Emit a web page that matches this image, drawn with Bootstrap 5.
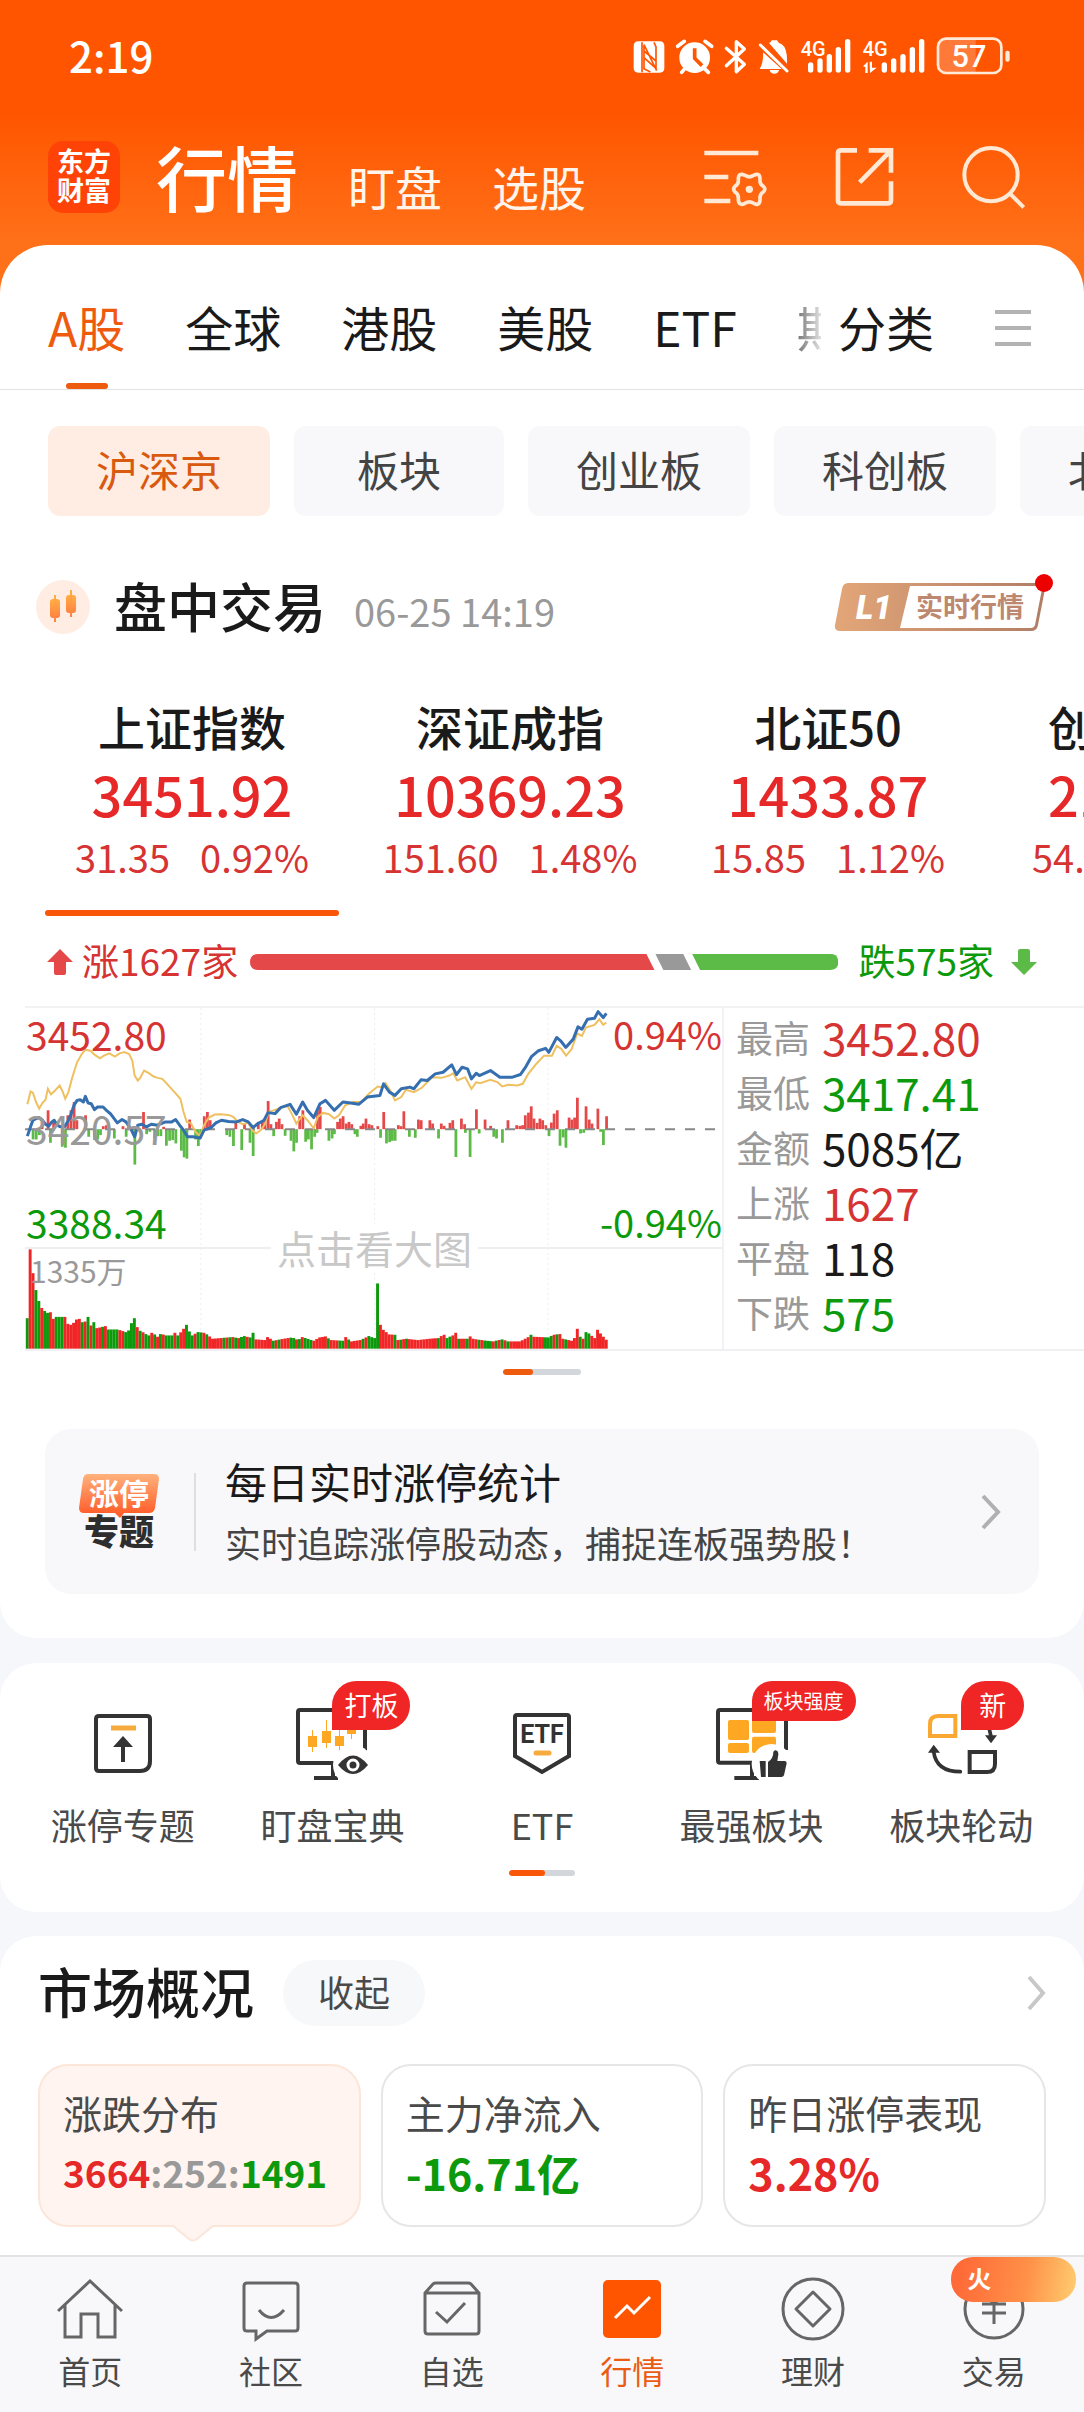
<!DOCTYPE html>
<html lang="zh-CN">
<head>
<meta charset="utf-8">
<meta name="viewport" content="width=device-width, initial-scale=1">
<title>行情</title>
<link href="https://cdn.jsdelivr.net/npm/bootstrap@5.3.0/dist/css/bootstrap.min.css" rel="stylesheet">
<style>
:root{--brand:#ff5500;--rise:#e62828;--fall:#0c9a0c;--ink:#1a1a1a;--muted:#999}
body{font-family:"Noto Sans CJK SC","Noto Sans",sans-serif;background:#f6f7fa;color:var(--ink);overflow-x:hidden;line-height:1.2}
a{color:inherit;text-decoration:none}
button{font-family:inherit;color:inherit;border:0;background:none;padding:0}
svg{display:block;flex-shrink:0}
.up{color:var(--rise)}.up-soft{color:#d63333}.down{color:var(--fall)}.dim{color:var(--muted)}
.hero{background:linear-gradient(#ff5500 0,#ff5500 112px,#ff7119 245px,#ff7119 320px,#f6f7fa 320px)}
.statusbar{height:114px;padding:0 74px 3px 69px;color:#fff}
.clock{font-size:42px;font-weight:500}
.topbar{height:131px;padding:0 58px 6px 48px;color:#fff}
.logo{width:72px;height:72px;border-radius:15px;background:#ff4306;font-size:27px;line-height:29px;font-weight:700;text-align:center;padding-top:5px;margin-right:36px}
.title-main{font-size:71px;line-height:84px;font-weight:500}
.title-sub{font-size:47px;line-height:60px;color:#fff5ec}
.titles{gap:50px;padding-bottom:4px}
.tools{gap:67px;margin-left:auto}
.sheet{background:#fff;border-radius:48px 48px 36px 36px;padding-bottom:44px}
.tabs{padding:0 52px 0 48px;border-bottom:1px solid #e3e3e3;font-size:48px;line-height:60px}
.tablist{gap:60px;overflow:hidden;flex:1 1 0;min-width:0;padding-top:51px}
.tablist a{padding-bottom:33px;white-space:nowrap;flex-shrink:0}
.tablist a.on{color:#ee5a0e;padding-bottom:0}
.tablist a.on::after{content:"";display:block;width:42px;height:6px;border-radius:3px;background:#ee5a0e;margin:27px auto 0}
.tablist a.cut{flex:0 0 24px;overflow:hidden;-webkit-mask-image:linear-gradient(90deg,#0009,#0002);mask-image:linear-gradient(90deg,#0009,#0002)}
.sortlink{margin:51px 60px 0 14px}
.menu-btn{margin-top:61px}
.chips{gap:24px;padding:36px 0 0 48px;overflow:hidden}
.chip{flex:0 0 auto;height:90px;min-width:210px;padding:0 48px 3px;border-radius:12px;background:#f8f8fa;color:#444;font-size:42px;white-space:nowrap}
.chip.on{background:#ffede3;color:#d9590f}
.session{height:72px;margin-top:55px;padding:0 30px 0 36px}
.session h1{font-size:53px;line-height:72px;font-weight:500;margin:0 28px 0 24px;padding-bottom:4px}
.session time{font-size:38px;line-height:72px;padding-top:8px;color:var(--muted)}
.indices{gap:24px;padding:55px 0 0 45px;overflow:hidden}
.index{flex:0 0 294px;text-align:center;white-space:nowrap}
.index.on::after{content:"";display:block;height:6px;border-radius:3px;background:#fa560a;margin-top:31px}
.index h2{font-size:47px;line-height:56px;font-weight:500;margin:0}
.index strong{display:block;font-size:54px;line-height:60px;font-weight:500;margin-top:10px}
.index p{display:flex;justify-content:center;gap:30px;font-size:38px;line-height:44px;margin:11px 0 0}
.index.edge{text-align:left;padding-left:49px}
.index.edge p{justify-content:flex-start;margin-left:-16px}
.breadth{height:44px;margin-top:24px;padding:0 46px;font-size:37px;line-height:40px}
.breadth span{padding-bottom:4px}
.breadth svg.meter{flex:1 1 0;min-width:0;margin:0 20px 0 12px}
.trend{margin:22px 0 0 25px;height:345px;border-top:2px solid #f2f2f4;border-bottom:2px solid #f0f0f2}
.plot{flex:0 0 66%;border-right:2px solid #f2f2f4}
.plot svg{width:100%;height:100%}
.plot span{position:absolute;font-size:38px;line-height:44px}
.plot .tl,.plot .ml,.plot .bl{left:1px;font-size:39px}
.plot .tl,.plot .tr{top:4px}.plot .ml{top:98px}.plot .bl,.plot .br{top:192px}
.plot .tr,.plot .br{right:0}
.plot .vol{left:5px;top:240px;font-size:30px}
.plot .hint{left:246px;top:216px;padding:0 6px;background:#fff;color:#c8c8c8;line-height:46px;font-size:39px}
.figures{margin:2px 0 0 12px;font-size:44px;line-height:55px}
.figures th{font-size:37px;font-weight:400;color:var(--muted);padding:0 12px 0 0}
.figures td{padding:0}
.pager{display:flex;height:6px;border-radius:3px;background:#d3d6db;margin:18px auto 0;width:78px;overflow:hidden}
.pager i{width:30px;border-radius:3px;background:#ee5a0e}
.promo{margin:54px 45px 0;height:165px;border-radius:26px;background:#f8f8fa;padding:0 37px 0 34px}
.promo .rule{width:2px;height:78px;background:#dfdfe2;margin:0 29px 0 35px}
.promo h3{font-size:42px;line-height:56px;font-weight:400;margin:0 0 5px}
.promo p{font-size:36px;line-height:56px;color:#444;margin:0}
.panel{background:#fff;border-radius:36px}
.shortcuts{margin-top:25px;padding:45px 18px 36px}
.shortcut{flex:1 1 0;font-size:36px;line-height:44px;color:#4a4a4a;position:relative}
.shortcut svg{width:72px;height:72px;margin:0 auto 22px}
.flag{position:absolute;left:50%;top:-27px;height:49px;padding:0 12px;border-radius:25px 25px 25px 0;background:#f02525;color:#fff;font-size:27px;line-height:47px;white-space:nowrap}
.flag.slim{height:40px;line-height:39px;font-size:20px;border-radius:20px 20px 20px 0}
.flag.solo{padding:0 18px}
.shortcuts .pager{width:66px;margin-top:24px}
.shortcuts .pager i{width:36px;background:#fa560a}
.overview{margin-top:24px;padding:24px 38px 28px;border-radius:36px 36px 0 0}
.overview h2{font-size:54px;line-height:62px;font-weight:500;margin:0 29px 4px 0}
.fold{height:66px;padding:0 35px 3px;border-radius:33px;background:#f7f8fa;font-size:36px;color:#4a4a4a}
.stats{gap:20px;margin-top:38px}
.stat{flex:1 1 0;height:163px;border:2px solid #e6e6e6;border-radius:30px;padding:21px 0 0 23px;position:relative;white-space:nowrap}
.stat h3{font-size:39px;line-height:50px;font-weight:400;color:#4a4a4a;margin:0 0 7px}
.stat b{display:block;font-size:43px;line-height:56px}
.stat.on{background:#fff4ef;border-color:#fce5d9}
.stat.on b{font-size:37px}
.stat .notch{position:absolute;left:131px;top:100%}
.dock{height:157px;border-top:2px solid #e3e3e5;background:#f8f8fa;padding-top:20px}
.dock a{flex:1 1 0;font-size:32px;line-height:40px;color:#4a4a4a;position:relative}
.dock a.on{color:#ea5c14}
.dock svg{width:66px;height:66px;margin:0 auto 7px}
.fire{position:absolute;left:48px;top:-20px;width:125px;height:45px;border-radius:22px;background:linear-gradient(100deg,#ff6b38 10%,#ff9148 60%,#ffce70);color:#fff;font-size:24px;line-height:42px;font-weight:700;padding-left:16px;text-align:left}
</style>
<script src="https://cdn.jsdelivr.net/npm/bootstrap@5.3.0/dist/js/bootstrap.bundle.min.js"></script>
</head>
<body>
<div class="d-flex flex-column min-vh-100">
<div class="hero">
  <div class="statusbar d-flex align-items-center justify-content-between">
    <span class="clock">2:19</span>
    <svg width="377" height="38" viewBox="100 50 1131 114" fill="#fff">
      <path d="M116 63h64q14 0 14 14v66q0 14-14 14h-64q-14 0-14-14V77q0-14 14-14z"/>
      <path d="M127 66v90M133 73l38 78M133 73v72l19 10M163 66l6 14v66M133 92l36 30M133 112l36 32" stroke="#ff5500" stroke-width="5" fill="none"/>
      <circle cx="285" cy="112" r="46"/><path d="M234 78l20-15M336 78l-20-15M256 144l-10 12M314 144l12 12" stroke="#fff" stroke-width="11" stroke-linecap="round"/><path d="M285 84v30l22 22" stroke="#ff5500" stroke-width="11" fill="none"/>
      <path d="M380 84l54 48-24 22V64l24 22-54 50" fill="none" stroke="#fff" stroke-width="10" stroke-linejoin="round" stroke-linecap="round"/>
      <path d="M482 74l80 78" stroke="#fff" stroke-width="9" stroke-linecap="round"/><path d="M508 68q6-1 8-8h16q3 8 14 12 18 12 16 58zM490 96l56 50h-66q12-20 10-50zM510 149h28q-2 11-14 11t-14-11z"/>
      <g font-size="60" font-weight="500" font-family="Roboto,sans-serif"><text x="603" y="106">4G</text><text x="789" y="106">4G</text></g>
      <g stroke="#fff" stroke-width="16" stroke-linecap="round"><path d="M633 134v15M661 122v27M689 109v40M716 88v61M744 64v85M854 134v15M882 122v27M910 109v40M938 88v61M966 64v85"/></g>
      <path d="M790 138l14-14v34h-7v-18zM810 124h7v18h14l-20 16z"/>
      <path d="M1034 56h94v101h-94q-17 0-17-17V73q0-17 17-17z" opacity=".22"/>
      <rect x="1015" y="55" width="190" height="103" rx="24" fill="none" stroke="#ffeada" stroke-width="8"/><rect x="1217" y="91" width="13" height="33" rx="6" fill="#ffeada"/>
      <text x="1108" y="140" font-size="92" font-weight="500" text-anchor="middle" font-family="Roboto,sans-serif">57</text>
    </svg>
  </div>
  <header class="topbar d-flex align-items-center">
    <a href="#" class="logo">东方<br>财富</a>
    <nav class="titles d-flex align-items-baseline">
      <a href="#" class="title-main">行情</a><a href="#" class="title-sub">盯盘</a><a href="#" class="title-sub">选股</a>
    </nav>
    <div class="tools d-flex align-items-center">
      <button type="button" aria-label="行情设置"><svg width="64" height="64" viewBox="308 375 192 192" fill="none" stroke="#ffe8d4" stroke-width="14"><path d="M309 399h162M309 471h72M309 543h78"/><path d="M431 466q13 9 26 0 20-10 19 14-1 13 10 19 9 8 0 17-11 6-10 20 1 24-19 14-13-9-26 0-20 10-20-14 1-14-10-20-8-9 0-17 11-6 10-19-1-24 20-14z" stroke-width="11"/><circle cx="444" cy="508" r="11" fill="#ffe8d4" stroke="none"/></svg></button>
      <button type="button" aria-label="分享"><svg width="60" height="64" viewBox="698 375 180 192" fill="none" stroke="#ffe8d4" stroke-width="14"><path d="M764 391h-48q-9 0-9 9v141q0 9 9 9h141q9 0 9-9v-57M799 391h67v67M866 391l-94 96"/></svg></button>
      <button type="button" aria-label="搜索"><svg width="64" height="64" viewBox="1086 373 192 192" fill="none" stroke="#ffe8d4" stroke-width="12"><circle cx="1173" cy="462" r="80"/><path d="M1229 518l42 42"/></svg></button>
    </div>
  </header>
  <main class="sheet">
    <div class="tabs d-flex align-items-start">
      <nav class="tablist d-flex">
        <a href="#" class="on">A股</a><a href="#">全球</a><a href="#">港股</a><a href="#">美股</a><a href="#">ETF</a><a href="#" class="cut">期</a>
      </nav>
      <a href="#" class="sortlink">分类</a>
      <button type="button" aria-label="全部市场" class="menu-btn"><svg width="38" height="44" viewBox="0 0 38 44" stroke="#b3b3b3" stroke-width="4"><path d="M1 6h36M1 22h36M1 38h36"/></svg></button>
    </div>
    <div class="chips d-flex">
      <button type="button" class="chip on">沪深京</button><button type="button" class="chip">板块</button><button type="button" class="chip">创业板</button><button type="button" class="chip">科创板</button><button type="button" class="chip">北交所</button>
    </div>
    <div class="session d-flex align-items-center">
      <svg width="54" height="54" viewBox="0 0 54 54"><defs><linearGradient id="cd" x2="0" y2="1"><stop stop-color="#ffae45"/><stop offset="1" stop-color="#ff8142"/></linearGradient></defs><circle cx="27" cy="27" r="27" fill="#ffede3"/><g fill="url(#cd)"><rect x="14" y="19" width="10" height="19" rx="3"/><rect x="18" y="15" width="2" height="27"/><rect x="30" y="15" width="10" height="18" rx="3"/><rect x="34" y="10" width="2" height="27"/></g></svg>
      <h1>盘中交易</h1><time>06-25 14:19</time>
      <svg class="ms-auto" width="220" height="68" viewBox="0 2 220 68"><defs><linearGradient id="lv"><stop stop-color="#e3a678"/><stop offset="1" stop-color="#b07d66"/></linearGradient></defs>
        <path d="M14 12h192q6 0 5 6l-7 36q-1 6-7 6H6q-6 0-5-6l7-36q1-6 6-6z" fill="url(#lv)"/><path d="M76 15h129q3 0 3 3l-7 36q-1 3-4 3H66z" fill="#fff"/>
        <text x="22" y="48" font-size="33" font-weight="900" font-style="italic" fill="#fff" font-family="Roboto,sans-serif">L1</text>
        <text x="82" y="46" font-size="27" font-weight="700" fill="#bd8870">实时行情</text><circle cx="210" cy="12" r="9" fill="#ec0000"/></svg>
    </div>
    <div class="indices d-flex">
      <a href="#" class="index on"><h2>上证指数</h2><strong class="up">3451.92</strong><p class="up-soft"><span>31.35</span><span>0.92%</span></p></a>
      <a href="#" class="index"><h2>深证成指</h2><strong class="up">10369.23</strong><p class="up-soft"><span>151.60</span><span>1.48%</span></p></a>
      <a href="#" class="index"><h2>北证50</h2><strong class="up">1433.87</strong><p class="up-soft"><span>15.85</span><span>1.12%</span></p></a>
      <a href="#" class="index edge"><h2>创业板指</h2><strong class="up">21</strong><p class="up-soft"><span>54.</span></p></a>
    </div>
    <div class="breadth d-flex align-items-center">
      <svg width="28" height="28" viewBox="0 0 28 28" class="me-2" fill="#e54848"><path d="M14 1l13 13h-7v11q0 2-2 2h-8q-2 0-2-2V14H1z"/></svg>
      <span class="up-soft">涨1627家</span>
      <svg class="meter" height="16" viewBox="0 0 592 16" preserveAspectRatio="none"><path d="M8 0h391l8 16H8Q0 16 0 8t8-8z" fill="#e54848"/><path d="M408 0h28l8 16h-28z" fill="#999"/><path d="M445 0h139q8 0 8 8t-8 8H453z" fill="#5cba47"/></svg>
      <span class="down">跌575家</span>
      <svg width="28" height="28" viewBox="0 0 28 28" class="ms-3" fill="#5cba47"><path d="M14 27L1 14h7V3q0-2 2-2h8q2 0 2 2v11h7z"/></svg>
    </div>
    <div class="trend d-flex">
      <div class="plot position-relative">
        <svg id="plot" viewBox="64 81 1767 1030" preserveAspectRatio="none"></svg>
        <span class="tl up-soft">3452.80</span><span class="ml dim">3420.57</span><span class="bl down">3388.34</span>
        <span class="tr up-soft">0.94%</span><span class="br down">-0.94%</span><span class="vol dim">1335万</span><span class="hint">点击看大图</span>
      </div>
      <div>
      <table class="figures">
        <tbody>
        <tr><th scope="row">最高</th><td class="up-soft">3452.80</td></tr>
        <tr><th scope="row">最低</th><td class="down">3417.41</td></tr>
        <tr><th scope="row">金额</th><td>5085亿</td></tr>
        <tr><th scope="row">上涨</th><td class="up-soft">1627</td></tr>
        <tr><th scope="row">平盘</th><td>118</td></tr>
        <tr><th scope="row">下跌</th><td class="down">575</td></tr>
        </tbody>
      </table>
      </div>
    </div>
    <div class="pager"><i></i></div>
    <a href="#" class="promo d-flex align-items-center">
      <svg width="80" height="76" viewBox="0 0 80 76"><defs><linearGradient id="zt" x2="0" y2="1"><stop stop-color="#ffb27c"/><stop offset="1" stop-color="#ff5522"/></linearGradient></defs><path d="M9 0h66q5 0 5 5l-4 29q-1 5-6 5H45l-4 5-5-5H5q-5 0-5-5L4 5q1-5 5-5z" fill="url(#zt)"/><text x="10" y="31" font-size="30" font-weight="700" fill="#fff">涨停</text><text x="5" y="71" font-size="35" font-weight="900" fill="#2e2e2e">专题</text></svg>
      <span class="rule"></span>
      <div><h3>每日实时涨停统计</h3><p>实时追踪涨停股动态，捕捉连板强势股！</p></div>
      <svg class="ms-auto" width="22" height="36" viewBox="0 0 22 36" fill="none" stroke="#b0b0b0" stroke-width="4"><path d="M3 2l15 16L3 34"/></svg>
    </a>
  </main>
</div>

<section class="panel shortcuts">
  <div class="d-flex text-center">
    <a href="#" class="shortcut"><svg viewBox="0 0 72 72" fill="none" stroke="#333" stroke-width="4"><path d="M12 8h48q3 0 3 3v42q0 10-10 10H12q-3 0-3-3V11q0-3 3-3z"/><path d="M24 20h25" stroke="#f5ab3d" stroke-width="5"/><path d="M36 34v20"/><path d="M36 28l10 11H26z" fill="#333" stroke="none"/></svg>涨停专题</a>
    <a href="#" class="shortcut"><svg viewBox="0 0 72 72"><path d="M37 70V55H4q-2 0-2-2V4q0-2 2-2h63q2 0 2 2v44M18 70h24" fill="none" stroke="#333" stroke-width="4"/><g fill="#fea722"><path d="M12 28h9v11h-9zM16 22h1v22h-1zM26 23h9v12h-9zM30 12h1v28h-1zM39 28h9v10h-9zM43 21h1v24h-1zM51 17h9v9h-9zM55 15h1v16h-1z"/></g><circle cx="57" cy="57" r="20" fill="#fff"/><path d="M42 57q15-19 30 0-15 18-30 0z" fill="#333"/><circle cx="57" cy="57" r="5" fill="#333" stroke="#fff" stroke-width="3"/></svg>盯盘宝典<span class="flag">打板</span></a>
    <a href="#" class="shortcut"><svg viewBox="0 0 72 72"><path d="M11 7h50q2 0 2 2v39L36 64 9 48V9q0-2 2-2z" fill="none" stroke="#333" stroke-width="4"/><text x="36" y="35" font-size="25" font-weight="700" text-anchor="middle" fill="#333" font-family="Roboto,sans-serif">ETF</text><path d="M30 45h13" stroke="#f5ab3d" stroke-width="5" stroke-linecap="round"/></svg>ETF</a>
    <a href="#" class="shortcut"><svg viewBox="345 144 216 216"><path d="M453 354V308H357q-6 0-6-6V156q0-6 6-6h192q6 0 6 6v114M400 354h75" fill="none" stroke="#333" stroke-width="12"/><g fill="#fea722"><rect x="381" y="180" width="63" height="60" rx="6"/><rect x="453" y="170" width="72" height="49" rx="6"/><rect x="381" y="249" width="63" height="30" rx="6"/><rect x="453" y="230" width="72" height="49" rx="6"/></g><circle cx="512" cy="312" r="60" fill="#fff"/><path d="M476 303h18v48h-14zM501 306q16-10 16-30 2-6 8-5 8 3 7 12l-3 20h22q6 0 6 7l-8 36q-2 5-8 5h-40z" fill="#333"/></svg>最强板块<span class="flag slim">板块强度</span></a>
    <a href="#" class="shortcut"><svg viewBox="975 144 216 216" fill="none"><path d="M1014 168h52v60h-76v-36q0-24 24-24z" stroke="#f9a832" stroke-width="12"/><path d="M1109 276h76v36q0 24-24 24h-52z" stroke="#333" stroke-width="12"/><path d="M1001 275q8 60 80 60M1165 195l8 34" stroke="#333" stroke-width="11" stroke-linecap="round"/><path d="M1001 254l19 24h-36zM1173 250l-18-24h36z" fill="#333"/></svg>板块轮动<span class="flag solo">新</span></a>
  </div>
  <div class="pager"><i></i></div>
</section>

<section class="panel overview flex-grow-1">
  <div class="d-flex align-items-center">
    <h2>市场概况</h2><button type="button" class="fold">收起</button>
    <a href="#" class="ms-auto" aria-label="更多"><svg width="20" height="36" viewBox="0 0 20 36" fill="none" stroke="#c8c8c8" stroke-width="4"><path d="M3 2l14 16L3 34"/></svg></a>
  </div>
  <div class="stats d-flex">
    <a href="#" class="stat on"><h3>涨跌分布</h3><b><span class="up">3664</span><span class="dim">:252:</span><span class="down">1491</span></b><svg class="notch" width="44" height="17" viewBox="0 0 44 17"><path d="M0-2l18 15q4 3 8 0L44-2z" fill="#fff4ef"/><path d="M1 0l17 14q4 3 8 0L43 0" fill="none" stroke="#fce5d9" stroke-width="2"/></svg></a>
    <a href="#" class="stat"><h3>主力净流入</h3><b class="down">-16.71亿</b></a>
    <a href="#" class="stat"><h3>昨日涨停表现</h3><b class="up">3.28%</b></a>
  </div>
</section>

<nav class="dock d-flex text-center">
  <a href="#"><svg viewBox="0 0 66 66" fill="none" stroke="#666" stroke-width="3"><path d="M1 34L33 4l32 30M8 28v32h16V37h17v23h17V28"/></svg>首页</a>
  <a href="#"><svg viewBox="0 0 66 66" fill="none" stroke="#666" stroke-width="3"><path d="M9 6h48q3 0 3 3v42q0 3-3 3H29l-11 8v-8H9q-3 0-3-3V9q0-3 3-3zM21 33q12 15 25 0"/></svg>社区</a>
  <a href="#"><svg viewBox="0 0 66 66" fill="none" stroke="#666" stroke-width="3"><path d="M6 16l8-9q1-1 3-1h32q2 0 3 1l8 9v38q0 3-3 3H9q-3 0-3-3zM6 16h54M17 35l11 10 18-19"/></svg>自选</a>
  <a href="#" class="on"><svg viewBox="0 0 66 66" fill="none"><rect x="4" y="3" width="58" height="58" rx="5" fill="#ff5500"/><path d="M16 41l12-12 7 7 16-16" stroke="#fff" stroke-width="3"/></svg>行情</a>
  <a href="#"><svg viewBox="0 0 66 66" fill="none" stroke="#666" stroke-width="3"><circle cx="33" cy="32" r="30"/><path d="M33 15l17 17-17 17-17-17z" stroke-linejoin="round"/></svg>理财</a>
  <a href="#"><svg viewBox="0 0 66 66" fill="none" stroke="#666" stroke-width="3"><circle cx="33" cy="32" r="29"/><path d="M23 17l10 10 10-10M33 27v20M21 27h24M21 36h24"/></svg>交易<span class="fire">火</span></a>
</nav>
</div>
<script>
// 分时图：指数线、均价线、涨跌动能柱与成交量
const price="70,468 78,440 84,420 92,415 100,412 108,420 116,432 124,438 132,425 138,420 146,435 154,440 164,440 172,425 180,405 188,375 196,360 204,358 212,365 217,348 224,368 232,370 240,388 248,380 262,380 272,392 282,402 298,428 310,418 320,425 332,445 342,470 350,435 360,432 372,440 384,432 400,435 420,425 436,425 446,418 456,435 466,450 476,470 490,470 508,474 518,450 536,442 548,428 562,420 580,424 600,425 616,418 630,425 642,442 655,430 670,420 680,397 698,400 712,382 736,372 752,402 768,365 780,390 796,412 812,370 826,360 848,390 870,365 890,368 910,372 932,350 964,345 973,310 988,335 1002,345 1018,325 1040,320 1050,325 1068,298 1084,300 1104,280 1124,275 1146,253 1158,282 1172,260 1186,265 1196,295 1208,278 1216,285 1244,270 1268,290 1300,290 1320,282 1334,258 1348,228 1366,210 1384,203 1392,215 1412,170 1422,180 1435,200 1454,175 1466,138 1476,145 1490,115 1508,112 1517,92 1530,110 1538,97";
const average="70,372 78,333 84,337 92,365 100,385 108,368 116,358 122,325 130,342 142,328 152,315 160,335 166,355 174,335 184,290 196,245 208,220 217,207 230,210 240,222 254,233 264,225 278,218 292,228 304,218 316,214 328,220 336,240 342,285 350,300 356,292 366,270 378,278 390,288 400,292 412,295 424,310 436,326 448,342 458,355 466,395 474,425 484,428 496,455 508,468 518,435 530,412 545,403 560,402 580,404 592,410 604,425 616,432 630,428 640,450 650,460 662,450 672,432 682,395 700,388 716,380 730,378 740,400 752,430 768,405 780,420 796,445 806,410 820,398 835,402 848,415 860,405 876,375 896,365 916,365 936,340 958,318 968,320 978,308 990,330 1002,360 1018,350 1030,328 1050,335 1070,322 1080,310 1096,290 1120,292 1140,285 1150,278 1160,300 1180,290 1196,325 1208,305 1218,308 1244,298 1262,305 1274,318 1290,313 1312,315 1326,310 1340,280 1360,250 1380,225 1400,225 1412,195 1424,205 1436,225 1450,205 1464,158 1476,165 1486,140 1508,132 1520,115 1530,132 1538,125";
const force="84,478 92,478 100,465 128,488 158,500 166,503 225,470 240,480 248,478 255,465 290,475 320,470 342,554 372,462 380,455 392,475 400,468 408,468 422,497 430,482 438,480 446,490 460,512 467,532 474,536 496,478 503,498 510,460 575,465 583,470 592,498 613,510 634,488 642,528 694,468 723,467 738,482 745,514 752,488 775,485 782,478 790,508 798,470 804,458 834,482 842,475 848,462 900,462 906,470 965,473 980,490 988,486 995,482 1002,482 1038,470 1053,473 1112,475 1156,531 1180,458 1192,531 1215,460 1252,470 1259,475 1274,488 1392,468 1420,497 1428,472 1435,503 1472,460 1480,458 1523,455 1530,495 107,425 122,390 136,420 172,405 180,390 188,365 195,420 217,405 262,438 270,435 312,438 364,395 518,408 526,395 533,420 415,440 481,418 598,425 620,430 655,425 665,425 672,420 680,362 687,432 701,425 708,415 715,432 760,408 768,390 805,390 812,380 856,425 863,415 870,408 878,430 885,425 892,432 915,437 921,430 928,415 936,432 943,435 958,438 973,395 1010,435 1017,438 1024,393 1061,418 1068,420 1090,420 1097,430 1119,430 1126,437 1141,428 1148,420 1170,415 1178,432 1208,387 1230,418 1244,437 1288,420 1310,435 1318,437 1325,435 1332,405 1340,397 1347,378 1354,415 1362,428 1369,415 1376,420 1384,435 1398,427 1405,400 1413,390 1443,412 1450,418 1457,412 1464,352 1486,378 1494,418 1501,430 1516,385 1538,408";
const volume="70,1018 77,810 85,882 93,933 100,966 107,987 114,996 122,1002 129,1000 137,1020 144,1014 166,1014 172,1035 180,1038 188,1032 195,1022 203,1020 210,1030 217,1028 225,1014 232,1040 240,1030 247,1048 268,1042 276,1052 300,1052 320,1060 328,1055 335,1033 342,1018 350,1045 357,1056 372,1066 380,1070 388,1062 400,1074 410,1066 425,1070 440,1070 446,1062 453,1070 466,1050 474,1038 481,1058 488,1070 503,1060 520,1062 540,1080 560,1078 590,1075 605,1078 620,1072 634,1076 642,1062 650,1082 672,1084 680,1075 694,1086 720,1080 742,1076 756,1084 768,1075 795,1086 812,1076 826,1073 840,1084 870,1086 878,1075 890,1088 915,1084 936,1072 950,1078 958,913 966,1038 973,1053 980,1060 990,1067 1003,1068 1012,1084 1030,1080 1060,1084 1090,1080 1110,1078 1126,1068 1134,1078 1148,1070 1156,1062 1163,1080 1185,1080 1192,1073 1200,1080 1220,1084 1250,1088 1274,1082 1290,1088 1318,1088 1335,1080 1347,1068 1354,1074 1390,1076 1405,1068 1418,1066 1428,1080 1450,1086 1457,1078 1464,1050 1472,1074 1480,1080 1486,1060 1494,1064 1508,1078 1516,1053 1523,1064 1530,1074 1538,1083";
const tint="GRRGGRGGRRGGGRRRRRRGRGRGRRGRGGGGRRGGGGRGRGGRGRGRGGGRGRRGGGRGGRGRRRRRGRGRGRGGRGGRRRRRRGRGRRRGGRGRGGGRRRRRGRRRGGRGRRRRGRGGGGRRRRRGRGRGRRRRRRRRRRGRRGGRRGRRGRRRGRGGGRGRGRGRRRRRRRGRRRRGGGRGRRGRRRRGRGGR".split("");
tint[121]="G";tint[122]="R";
const parse=s=>s.split(" ").map(p=>p.split(",").map(Number));
const vol=parse(volume);
const level=x=>{for(let i=1;i<vol.length;i++)if(x<=vol[i][0]){const[a,b]=vol[i-1],[c,d]=vol[i];if(c-x<3)return d;if(x-a<3)return b;return b+(d-b)*(x-a)/(c-a)}return vol[vol.length-1][1]};
let g='<path d="M64 806H1831" stroke="#efeff1" stroke-width="2" vector-effect="non-scaling-stroke"/><path d="M510 81V1110M950 81V1110M1390 81V1110" stroke="#ededf0" stroke-width="1" stroke-dasharray="2 3" vector-effect="non-scaling-stroke"/>';
parse(force).forEach(([x,y])=>{g+=`<rect x="${x-3}" y="${Math.min(y,447)}" width="7" height="${Math.abs(y-447)}" fill="${y<447?"#e54848":"#5cba47"}"/>`});
g+='<path d="M64 447H1831" stroke="#888" stroke-width="2" stroke-dasharray="10 10" vector-effect="non-scaling-stroke"/>';
for(let i=0;i<=200;i++){const x=70+i*7.34,y=level(x);g+=`<rect x="${x-4}" y="${y}" width="7.4" height="${1110-y}" fill="${(tint[i]||"R")==="R"?"#f02525":"#0c9a0c"}"/>`}
g+=`<polyline points="${average}" fill="none" stroke="#efc060" stroke-width="2" vector-effect="non-scaling-stroke"/><polyline points="${price}" fill="none" stroke="#356fb0" stroke-width="3" stroke-linejoin="round" vector-effect="non-scaling-stroke"/>`;
document.getElementById("plot").innerHTML=g;
</script>
</body>
</html>
